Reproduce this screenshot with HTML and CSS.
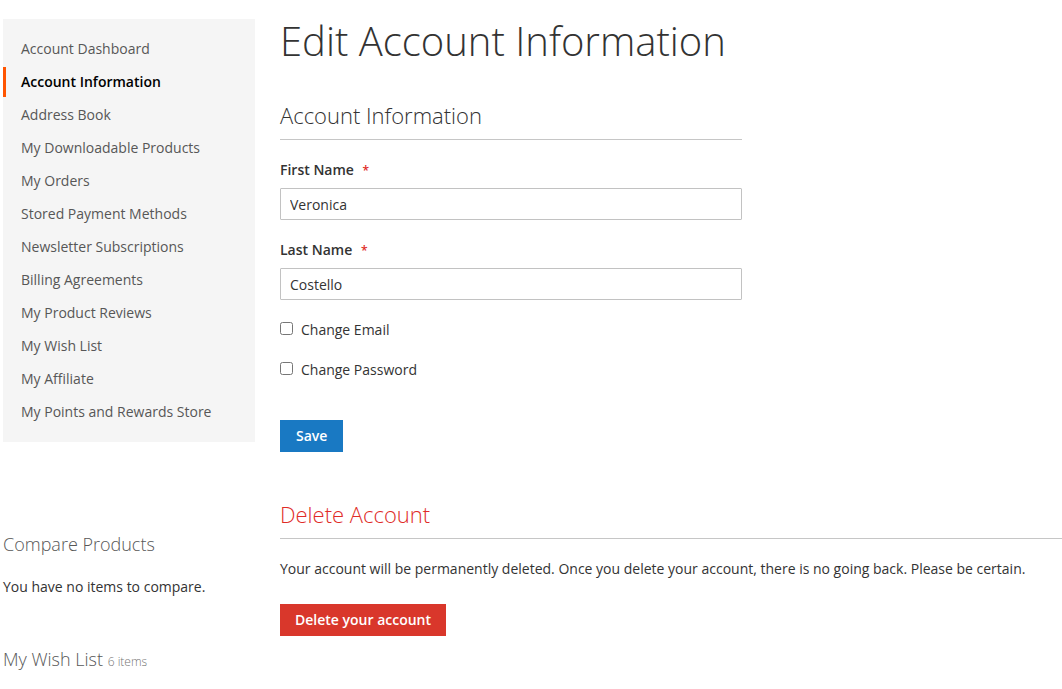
FILE: index.html
```html
<!DOCTYPE html>
<html lang="en">
<head>
<meta charset="utf-8">
<title>Edit Account Information</title>
<link rel="stylesheet" href="styles.css">
</head>
<body>
<div class="page">
  <aside class="sidebar">
    <nav class="account-nav">
      <ul class="nav-items">
        <li class="nav-item"><a href="#">Account Dashboard</a></li>
        <li class="nav-item current"><strong>Account Information</strong></li>
        <li class="nav-item"><a href="#">Address Book</a></li>
        <li class="nav-item"><a href="#">My Downloadable Products</a></li>
        <li class="nav-item"><a href="#">My Orders</a></li>
        <li class="nav-item"><a href="#">Stored Payment Methods</a></li>
        <li class="nav-item"><a href="#">Newsletter Subscriptions</a></li>
        <li class="nav-item"><a href="#">Billing Agreements</a></li>
        <li class="nav-item"><a href="#">My Product Reviews</a></li>
        <li class="nav-item"><a href="#">My Wish List</a></li>
        <li class="nav-item"><a href="#">My Affiliate</a></li>
        <li class="nav-item"><a href="#">My Points and Rewards Store</a></li>
      </ul>
    </nav>

    <div class="block block-compare">
      <div class="block-title">Compare Products</div>
      <div class="block-content">You have no items to compare.</div>
    </div>

    <div class="block block-wishlist">
      <div class="block-title">My Wish List <span class="counter">6 items</span></div>
    </div>
  </aside>

  <main class="main">
    <h1 class="page-title">Edit Account Information</h1>

    <form class="form-edit-account" action="#">
      <fieldset class="fieldset">
        <div class="legend">Account Information</div>

        <div class="field">
          <label class="label" for="firstname">First Name <span class="req">*</span></label>
          <input class="input-text" id="firstname" type="text" value="Veronica">
        </div>

        <div class="field">
          <label class="label" for="lastname">Last Name <span class="req">*</span></label>
          <input class="input-text" id="lastname" type="text" value="Costello">
        </div>

        <div class="field choice">
          <input class="checkbox" id="change-email" type="checkbox">
          <label for="change-email">Change Email</label>
        </div>

        <div class="field choice">
          <input class="checkbox" id="change-password" type="checkbox">
          <label for="change-password">Change Password</label>
        </div>
      </fieldset>

      <div class="actions">
        <button type="submit" class="action primary">Save</button>
      </div>
    </form>

    <section class="delete-account">
      <div class="legend legend-danger">Delete Account</div>
      <p class="delete-note">Your account will be permanently deleted. Once you delete your account, there is no going back. Please be certain.</p>
      <button type="button" class="action danger">Delete your account</button>
    </section>
  </main>
</div>
</body>
</html>
```

FILE: styles.css
```css
* {
  box-sizing: border-box;
}

html,
body {
  margin: 0;
  padding: 0;
  background: #ffffff;
}

body {
  font-family: "Open Sans", "Liberation Sans", sans-serif;
  font-size: 14px;
  line-height: 20px;
  color: #333333;
}

.page {
  display: flex;
  align-items: flex-start;
  padding: 19px 0 0 3px;
}

/* ---------- sidebar ---------- */

.sidebar {
  flex: 0 0 252px;
  width: 252px;
}

.account-nav {
  background: #f5f5f5;
  padding: 15px 0;
}

.nav-items {
  list-style: none;
  margin: 0;
  padding: 0;
  display: flex;
  flex-direction: column;
  gap: 3px;
}

.nav-item a,
.nav-item strong {
  display: block;
  padding: 5px 18px 5px 15px;
  line-height: 20px;
  color: #575757;
  text-decoration: none;
  border-left: 3px solid transparent;
}

.nav-item.current strong {
  color: #000000;
  font-weight: 600;
  border-left-color: #ff5501;
}

.block-title {
  font-size: 18px;
  line-height: 24px;
  font-weight: 300;
  color: #575757;
}

.block-compare {
  margin-top: 90px;
}

.block-compare .block-content {
  margin-top: 21px;
  color: #333333;
}

.block-wishlist {
  margin-top: 50px;
}

.block-wishlist .counter {
  font-size: 12px;
  color: #757575;
}

/* ---------- main column ---------- */

.main {
  flex: 1 1 auto;
  margin-left: 25px;
}

.page-title {
  margin: 0;
  padding-top: 2px;
  font-size: 40px;
  line-height: 40px;
  font-weight: 300;
  color: #333333;
}

.form-edit-account {
  width: 462px;
}

.fieldset {
  border: 0;
  margin: 40px 0 0;
  padding: 0;
  min-width: 0;
}

.legend {
  font-size: 22px;
  line-height: 28px;
  font-weight: 300;
  color: #333333;
  padding-bottom: 10px;
  border-bottom: 1px solid #c6c6c6;
}

.field {
  margin-top: 20px;
}

.label {
  display: block;
  height: 20px;
  font-weight: 600;
  line-height: 20px;
  margin-bottom: 8px;
}

.req {
  color: #e02b27;
  font-size: 12px;
  line-height: 1;
  margin-left: 5px;
}

.input-text {
  display: block;
  width: 100%;
  height: 32px;
  padding: 0 9px;
  border: 1px solid #c2c2c2;
  border-radius: 1px;
  font-family: inherit;
  font-size: 14px;
  color: #333333;
  background: #ffffff;
}

.field.choice {
  display: flex;
  align-items: center;
  height: 20px;
  line-height: 20px;
}

.field.choice .checkbox {
  width: 13px;
  height: 13px;
  margin: -3px 8px 0 0;
}

.actions {
  margin-top: 40px;
}

.action {
  display: inline-block;
  border: 0;
  border-radius: 0;
  padding: 7px 15px;
  font-family: inherit;
  font-size: 14px;
  line-height: 18px;
  font-weight: 600;
  color: #ffffff;
  cursor: pointer;
}

.action.primary {
  background: #1979c3;
  padding: 7px 16px;
}

.action.danger {
  background: #d9372b;
}

/* ---------- delete account ---------- */

.delete-account {
  margin-top: 48px;
}

.legend-danger {
  color: #e02b27;
}

.delete-note {
  margin: 20px 0 25px;
}
```
